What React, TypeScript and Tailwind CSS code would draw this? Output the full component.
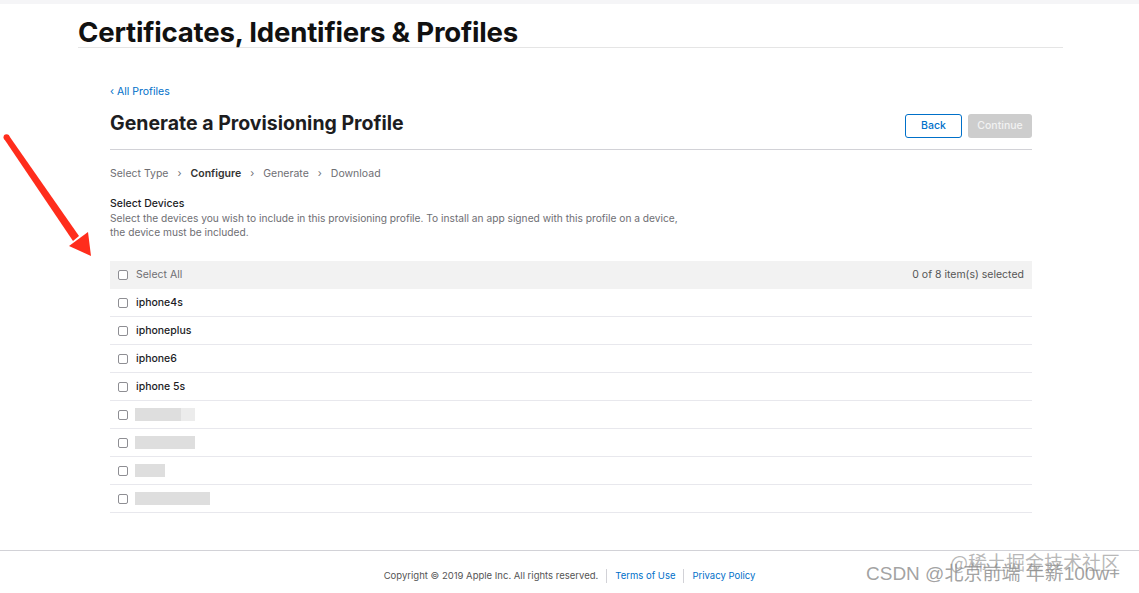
import React from "react"

const devices = ["iphone4s", "iphoneplus", "iphone6", "iphone 5s"]
const hidden = [
  { w: "w-[46px]", tail: "w-[14px]" },
  { w: "w-[60px]", tail: "w-0" },
  { w: "w-[30px]", tail: "w-0" },
  { w: "w-[75px]", tail: "w-0" },
]

function Box() {
  return <span className="block h-[10px] w-[10px] shrink-0 rounded-[2px] border border-[#8e8e93] bg-white" />
}

function Arrow() {
  return (
    <svg className="absolute left-0 top-[125px]" width="110" height="140" viewBox="0 125 110 140">
      <path d="M4.5 139.5 L8.5 135 L79 236 L73 241 Z" fill="#ff2d1c" />
      <path d="M69 246 L88 232 L91 256 Z" fill="#ff2d1c" />
      <circle cx="6.5" cy="137.3" r="3" fill="#ff2d1c" />
    </svg>
  )
}

export default function App() {
  return (
    <div className="relative min-h-[593px] w-[1139px] overflow-hidden bg-white font-['Inter',sans-serif] text-[#1d1d1f]">
      <div className="h-[4px] bg-[#f5f5f7]" />
      <div className="ml-[78px] w-[985px]">
        <h1 className="mt-[14px] border-b border-[#e5e5e5] pb-[1px] text-[27.6px] font-bold leading-[28px] tracking-[-0.2px] text-[#111]">
          Certificates, Identifiers &amp; Profiles
        </h1>

        <div className="pl-[32px] pr-[31px]">
          <a className="mt-[37px] block text-[10.5px] leading-[14px] text-[#0070c9]">‹ All Profiles</a>

          <div className="mt-[12px] flex items-start justify-between border-b border-[#d2d2d7] pb-[11px]">
            <h2 className="text-[19.5px] font-bold leading-[24px] text-[#1d1d1f]">Generate a Provisioning Profile</h2>
            <div className="mt-[3px] flex gap-[6px]">
              <button className="h-[24px] w-[57px] rounded-[3px] border border-[#0070c9] bg-white text-[10.5px] font-medium text-[#0070c9]">
                Back
              </button>
              <button className="h-[24px] w-[64px] rounded-[3px] bg-[#cdcdcd] text-[10.5px] font-medium text-[#f2f2f2]">
                Continue
              </button>
            </div>
          </div>

          <div className="mt-[17px] flex items-center text-[10.5px] leading-[14px] text-[#6e6e73]">
            <span>Select Type</span>
            <span className="mx-[9px]">›</span>
            <span className="font-semibold text-[#333]">Configure</span>
            <span className="mx-[9px]">›</span>
            <span>Generate</span>
            <span className="mx-[9px]">›</span>
            <span>Download</span>
          </div>

          <div className="mt-[16px] text-[10.5px] leading-[14px]">
            <div className="font-medium text-[#1d1d1f]">Select Devices</div>
            <p className="text-[10.2px] text-[#6e6e73]">
              Select the devices you wish to include in this provisioning profile. To install an app signed with this profile on a device,
              <br />
              the device must be included.
            </p>
          </div>

          <div className="mt-[22px]">
            <div className="flex h-[28px] items-center justify-between bg-[#f2f2f2] pl-[8px] pr-[8px] text-[10.5px]">
              <div className="flex items-center gap-[8px]">
                <Box />
                <span className="text-[#6e6e73]">Select All</span>
              </div>
              <span className="text-[#555]">0 of 8 item(s) selected</span>
            </div>
            {devices.map((d) => (
              <div key={d} className="flex h-[28px] items-center gap-[8px] border-b border-[#e8e8ed] pl-[8px] text-[10.5px] font-medium text-[#1d1d1f]">
                <Box />
                <span>{d}</span>
              </div>
            ))}
            {hidden.map((h, i) => (
              <div key={i} className="flex h-[28px] items-center gap-[7px] border-b border-[#e8e8ed] pl-[8px]">
                <Box />
                <div className="flex blur-[0.6px]">
                  <span className={`block h-[13px] ${h.w} bg-[#dedede]`} />
                  <span className={`block h-[13px] ${h.tail} bg-[#ececec]`} />
                </div>
              </div>
            ))}
          </div>
        </div>
      </div>

      <footer className="mt-[37px] border-t border-[#d2d2d7] pt-[18px]">
        <div className="flex items-center justify-center text-[9.5px] leading-[14px]">
          <span className="pr-[8px] text-[#555]">Copyright © 2019 Apple Inc. All rights reserved.</span>
          <span className="border-l border-[#d2d2d7] px-[8px] text-[#0070c9]">Terms of Use</span>
          <span className="border-l border-[#d2d2d7] pl-[8px] text-[#0070c9]">Privacy Policy</span>
        </div>
      </footer>

      <Arrow />

      <div className="pointer-events-none absolute left-[950px] top-[551px] whitespace-nowrap font-['Noto_Sans_CJK_SC',sans-serif] text-[19px] leading-[22px] text-[#999]/70">
        @稀土掘金技术社区
      </div>
      <div className="pointer-events-none absolute left-[866px] top-[563px] whitespace-nowrap font-['Liberation_Sans','Noto_Sans_CJK_SC',sans-serif] text-[19px] leading-[22px] text-[#8a8a8a]/80">
        CSDN @北京前端 年薪100w+
      </div>
    </div>
  )
}
